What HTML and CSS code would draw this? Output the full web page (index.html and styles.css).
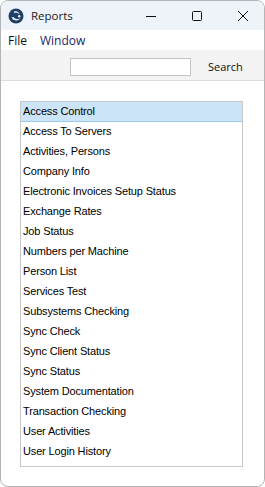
FILE: index.html
```html
<!DOCTYPE html>
<html lang="en">
<head>
  <meta charset="UTF-8" />
  <title>Reports</title>
  <link rel="stylesheet" href="styles.css">
</head>
<body>
  <div class="window">
    <div class="titlebar">
      <svg class="app-icon" width="16" height="16" viewBox="0 0 16 16">
        <circle cx="8" cy="8" r="7.5" fill="#1f3f66"/>
        <path d="M3.5 9.5 C5 13 10.5 13.5 12.8 10 C11 11.5 7 11.5 5.5 9 Z" fill="#e8eef6"/>
        <path d="M6 3.5 C8.5 2.5 11.5 4 11.5 6.5 C10.5 5 8 4.3 6 5.2 Z" fill="#e8eef6"/>
        <circle cx="11.2" cy="8.2" r="1.2" fill="#e8eef6"/>
      </svg>
      <span class="title">Reports</span>
      <div class="controls">
        <svg width="46" height="30" viewBox="0 0 46 30"><path d="M18 15.5 H28" stroke="#111" stroke-width="1"/></svg>
        <svg width="46" height="30" viewBox="0 0 46 30"><rect x="18.5" y="10.5" width="9" height="9" rx="1" fill="none" stroke="#111" stroke-width="1"/></svg>
        <svg width="46" height="30" viewBox="0 0 46 30"><path d="M18 10 L28 20 M28 10 L18 20" stroke="#111" stroke-width="1"/></svg>
      </div>
    </div>

    <div class="menubar">
      <span class="menu">File</span>
      <span class="menu menu-blue">Window</span>
    </div>

    <div class="toolbar">
      <input class="search-input" type="text" />
      <span class="search-label">Search</span>
    </div>

    <div class="content">
      <ul class="report-list">
        <li class="selected">Access Control</li>
        <li>Access To Servers</li>
        <li>Activities, Persons</li>
        <li>Company Info</li>
        <li>Electronic Invoices Setup Status</li>
        <li>Exchange Rates</li>
        <li>Job Status</li>
        <li>Numbers per Machine</li>
        <li>Person List</li>
        <li>Services Test</li>
        <li>Subsystems Checking</li>
        <li>Sync Check</li>
        <li>Sync Client Status</li>
        <li>Sync Status</li>
        <li>System Documentation</li>
        <li>Transaction Checking</li>
        <li>User Activities</li>
        <li>User Login History</li>
      </ul>
    </div>
  </div>
</body>
</html>
```

FILE: styles.css
```css
body {
  margin: 0;
  padding: 0;
  background: #ffffff;
  font-family: "Open Sans", "Liberation Sans", sans-serif;
}

.window {
  width: 265px;
  height: 487px;
  box-sizing: border-box;
  border: 1px solid #b4b4b4;
  border-radius: 8px;
  overflow: hidden;
  background: #ffffff;
  display: flex;
  flex-direction: column;
}

.titlebar {
  height: 29px;
  background: #eef3f9;
  display: flex;
  align-items: center;
  padding-left: 7px;
}

.app-icon {
  margin-right: 7px;
}

.title {
  font-size: 11.5px;
  color: #1a1a1a;
  flex: 1;
}

.controls {
  display: flex;
  margin-right: -2px;
}

.controls svg {
  display: block;
}

.menubar {
  height: 20px;
  background: #ffffff;
  display: flex;
  align-items: center;
  padding-left: 7px;
  gap: 13px;
  font-size: 12px;
}

.menu {
  color: #111;
}

.menu-blue {
  color: #1b2a6b;
}

.toolbar {
  height: 31px;
  box-sizing: border-box;
  background: #f3f3f3;
  border-bottom: 1px solid #dddddd;
  display: flex;
  align-items: center;
  padding: 3px 0 0 69px;
}

.search-input {
  width: 121px;
  height: 18px;
  box-sizing: border-box;
  border: 1px solid #c4c4c4;
  background: #ffffff;
  margin: 0;
  padding: 0;
}

.search-label {
  margin-left: 17px;
  font-size: 11px;
  color: #111;
}

.content {
  flex: 1;
  padding: 20px 0 0 19px;
}

.report-list {
  list-style: none;
  margin: 0;
  padding: 0;
  width: 223px;
  height: 366px;
  box-sizing: border-box;
  border: 1px solid #c8c8c8;
  font-family: "Liberation Sans", Arial, sans-serif;
  font-size: 11px;
  letter-spacing: -0.15px;
}

.report-list li {
  height: 20px;
  line-height: 19px;
  padding-left: 2px;
  color: #000;
  white-space: nowrap;
}

.report-list li.selected {
  background: #cce4f7;
  border-bottom: 1px solid #9ccaf0;
  height: 19px;
  line-height: 18px;
}
```
